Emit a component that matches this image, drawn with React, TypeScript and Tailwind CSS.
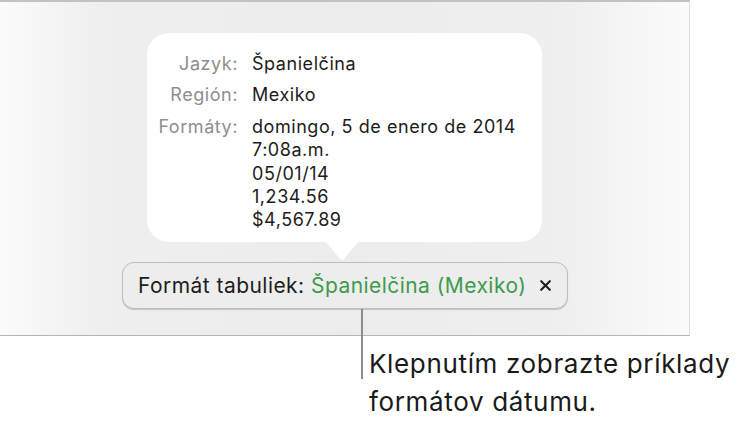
import React from "react";

const font = { fontFamily: 'Inter, "Liberation Sans", Arial, sans-serif' };

export default function App() {
  return (
    <div className="relative w-[745px] h-[439px] bg-white overflow-hidden" style={font}>
      <div className="w-[690px] h-[336px] border-t-2 border-b border-r border-t-[#c2c2c2] border-b-[#b4b4b4] border-r-[#dedede] bg-[linear-gradient(to_right,#fbfbfb_0%,#efefef_14%,#ececec_50%,#efefef_82%,#fbfbfb_100%)] flex flex-col">
        <div className="relative ml-[147px] mt-[31px] w-[395px] h-[209px] bg-white rounded-[22px] pt-[19px] pl-[0px]">
          <div className="grid grid-cols-[91px_1fr] gap-x-[14px] gap-y-[8px] text-[18px] leading-[23.4px] tracking-[0.55px]">
            <div className="text-right text-[#8e8e8e]">Jazyk:</div>
            <div className="text-[#1c1c1c]">Španielčina</div>
            <div className="text-right text-[#8e8e8e]">Región:</div>
            <div className="text-[#1c1c1c]">Mexiko</div>
            <div className="text-right text-[#8e8e8e]">Formáty:</div>
            <div className="text-[#1c1c1c] flex flex-col">
              <span>domingo, 5 de enero de 2014</span>
              <span>7:08a.m.</span>
              <span>05/01/14</span>
              <span>1,234.56</span>
              <span>$4,567.89</span>
            </div>
          </div>
          <svg className="absolute left-[178px] top-[208px]" width="34" height="20" viewBox="0 0 34 20">
            <path d="M0 0 L34 0 L19 18 Q17 20 15 18 Z" fill="#ffffff" />
          </svg>
        </div>
        <div className="ml-[122px] mt-[20px] w-[446px] h-[47px] rounded-[12px] border border-[#bdbdbd] bg-[#ededed] shadow-[0_1px_1px_rgba(0,0,0,0.18)] flex items-center pl-[15px] text-[21px] tracking-[0.45px] text-[#1d1d1d]">
          <span className="whitespace-nowrap">
            Formát tabuliek: <span className="text-[#3f9a4c]">Španielčina (Mexiko)</span>
          </span>
          <svg className="ml-[14px]" width="11" height="11" viewBox="0 0 11 11">
            <path d="M1.2 1.2 L9.8 9.8 M9.8 1.2 L1.2 9.8" stroke="#1d1d1d" strokeWidth="2.1" strokeLinecap="round" />
          </svg>
        </div>
      </div>
      <div className="absolute left-[361px] top-[309px] w-[2px] h-[70px] bg-[#8c8c8c]" />
      <div className="ml-[369px] mt-[9px] text-[26px] leading-[38px] tracking-[0.65px] text-[#1a1a1a] whitespace-nowrap">
        <div>Klepnutím zobrazte príklady</div>
        <div>formátov dátumu.</div>
      </div>
    </div>
  );
}
